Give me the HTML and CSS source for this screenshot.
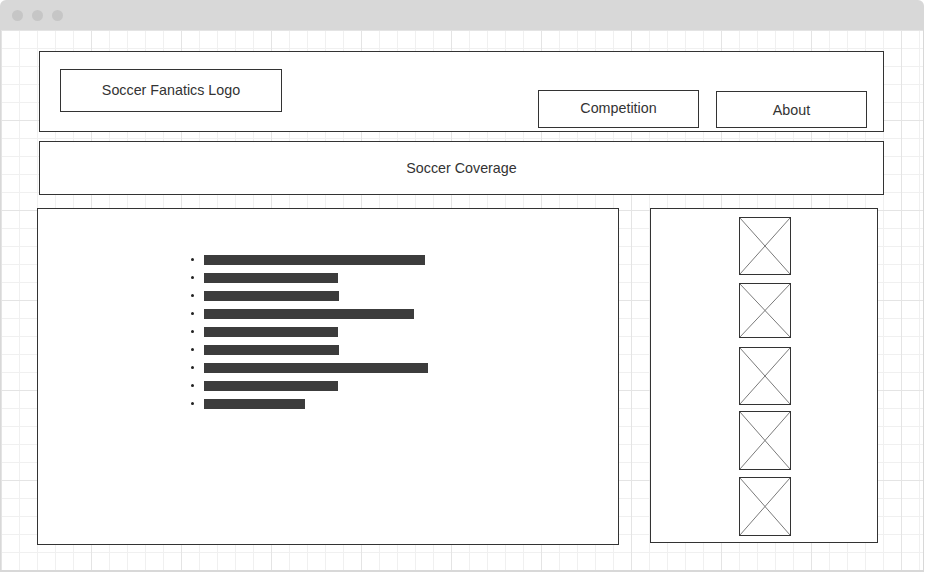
FILE: index.html
```html
<!DOCTYPE html>
<html lang="en">
<head>
<meta charset="utf-8">
<title>Soccer Fanatics</title>
<link rel="stylesheet" href="styles.css">
</head>
<body>
<div class="window">
  <div class="titlebar">
    <span class="dot"></span>
    <span class="dot"></span>
    <span class="dot"></span>
  </div>
  <div class="canvas">
    <header class="header">
      <div class="box logo">Soccer Fanatics Logo</div>
      <nav class="nav">
        <div class="box nav-competition">Competition</div>
        <div class="box nav-about">About</div>
      </nav>
    </header>
    <div class="box banner">Soccer Coverage</div>
    <div class="main-row">
      <section class="box content">
        <ul class="list">
          <li><span class="bar" style="width:221px"></span></li>
          <li><span class="bar" style="width:134px"></span></li>
          <li><span class="bar" style="width:135px"></span></li>
          <li><span class="bar" style="width:210px"></span></li>
          <li><span class="bar" style="width:134px"></span></li>
          <li><span class="bar" style="width:135px"></span></li>
          <li><span class="bar" style="width:224px"></span></li>
          <li><span class="bar" style="width:134px"></span></li>
          <li><span class="bar" style="width:101px"></span></li>
        </ul>
      </section>
      <aside class="box sidebar">
        <div class="thumb thumb-1"><svg class="thumb-x" viewBox="0 0 100 100" preserveAspectRatio="none"><line x1="0" y1="0" x2="100" y2="100"/><line x1="100" y1="0" x2="0" y2="100"/></svg></div>
        <div class="thumb thumb-2"><svg class="thumb-x" viewBox="0 0 100 100" preserveAspectRatio="none"><line x1="0" y1="0" x2="100" y2="100"/><line x1="100" y1="0" x2="0" y2="100"/></svg></div>
        <div class="thumb thumb-3"><svg class="thumb-x" viewBox="0 0 100 100" preserveAspectRatio="none"><line x1="0" y1="0" x2="100" y2="100"/><line x1="100" y1="0" x2="0" y2="100"/></svg></div>
        <div class="thumb thumb-4"><svg class="thumb-x" viewBox="0 0 100 100" preserveAspectRatio="none"><line x1="0" y1="0" x2="100" y2="100"/><line x1="100" y1="0" x2="0" y2="100"/></svg></div>
        <div class="thumb thumb-5"><svg class="thumb-x" viewBox="0 0 100 100" preserveAspectRatio="none"><line x1="0" y1="0" x2="100" y2="100"/><line x1="100" y1="0" x2="0" y2="100"/></svg></div>
      </aside>
    </div>
  </div>
</div>
</body>
</html>
```
FILE: styles.css
```css
* {
  box-sizing: border-box;
}

html, body {
  margin: 0;
  padding: 0;
  background: #ffffff;
}

body {
  font-family: "Liberation Sans", Arial, Helvetica, sans-serif;
  font-size: 14.3px;
  color: #333333;
}

.window {
  width: 924px;
  height: 572px;
  display: flex;
  flex-direction: column;
}

.titlebar {
  height: 30px;
  flex: 0 0 30px;
  background: #d8d8d8;
  border-radius: 6px 6px 0 0;
  display: flex;
  align-items: center;
  gap: 9px;
  padding-left: 12px;
}

.dot {
  width: 11px;
  height: 11px;
  border-radius: 50%;
  background: #c6c6c6;
}

.canvas {
  flex: 1 1 auto;
  border: 1px solid #d8d8d8;
  border-top: 0;
  border-bottom: 2px solid #d8d8d8;
  background-color: #ffffff;
  background-image:
    linear-gradient(to right, #e4e4e4 1px, transparent 1px),
    linear-gradient(to bottom, #e4e4e4 1px, transparent 1px),
    linear-gradient(to right, #f0f0f0 1px, transparent 1px),
    linear-gradient(to bottom, #f0f0f0 1px, transparent 1px);
  background-size: 90px 90px, 90px 90px, 18px 18px, 18px 18px;
  padding: 21px 0 0 36px;
}

.box {
  border: 1px solid #333333;
  background: #ffffff;
}

.header {
  width: 845px;
  height: 81px;
  margin-left: 2px;
  border: 1px solid #333333;
  background: #ffffff;
  display: flex;
  align-items: flex-start;
  padding: 17px 16px 0 20px;
}

.logo {
  width: 222px;
  height: 43px;
  display: flex;
  align-items: center;
  justify-content: center;
  padding-bottom: 2px;
}

.nav {
  margin-left: auto;
  margin-top: 21px;
  display: flex;
  align-items: flex-start;
  gap: 17px;
}

.nav-competition {
  width: 161px;
  height: 38px;
  display: flex;
  align-items: center;
  justify-content: center;
  padding-bottom: 2px;
}

.nav-about {
  width: 151px;
  height: 37px;
  margin-top: 1px;
  display: flex;
  align-items: center;
  justify-content: center;
}

.banner {
  width: 845px;
  height: 54px;
  margin: 9px 0 0 2px;
  display: flex;
  align-items: center;
  justify-content: center;
}

.main-row {
  display: flex;
  align-items: flex-start;
  gap: 31px;
  margin-top: 13px;
}

.content {
  width: 582px;
  height: 337px;
}

.list {
  list-style: none;
  margin: 0;
  padding: 42px 0 0 153px;
}

.list li {
  height: 18px;
  display: flex;
  align-items: center;
}

.list li::before {
  content: "";
  width: 3px;
  height: 3px;
  border-radius: 50%;
  background: #222222;
  margin-right: 10px;
  margin-bottom: 1px;
}

.bar {
  height: 10px;
  background: #3c3c3c;
}

.sidebar {
  width: 228px;
  height: 335px;
  display: flex;
  flex-direction: column;
  padding: 8px 0 0 88px;
}

.thumb {
  width: 52px;
  border: 1px solid #333333;
  background: #ffffff;
}

.thumb-1 { height: 58px; }
.thumb-2 { height: 55px; margin-top: 8px; }
.thumb-3 { height: 58px; margin-top: 9px; }
.thumb-4 { height: 59px; margin-top: 6px; }
.thumb-5 { height: 59px; margin-top: 7px; }

.thumb-x {
  display: block;
  width: 100%;
  height: 100%;
}

.thumb-x line {
  stroke: #7a7a7a;
  stroke-width: 1;
  vector-effect: non-scaling-stroke;
}
```
